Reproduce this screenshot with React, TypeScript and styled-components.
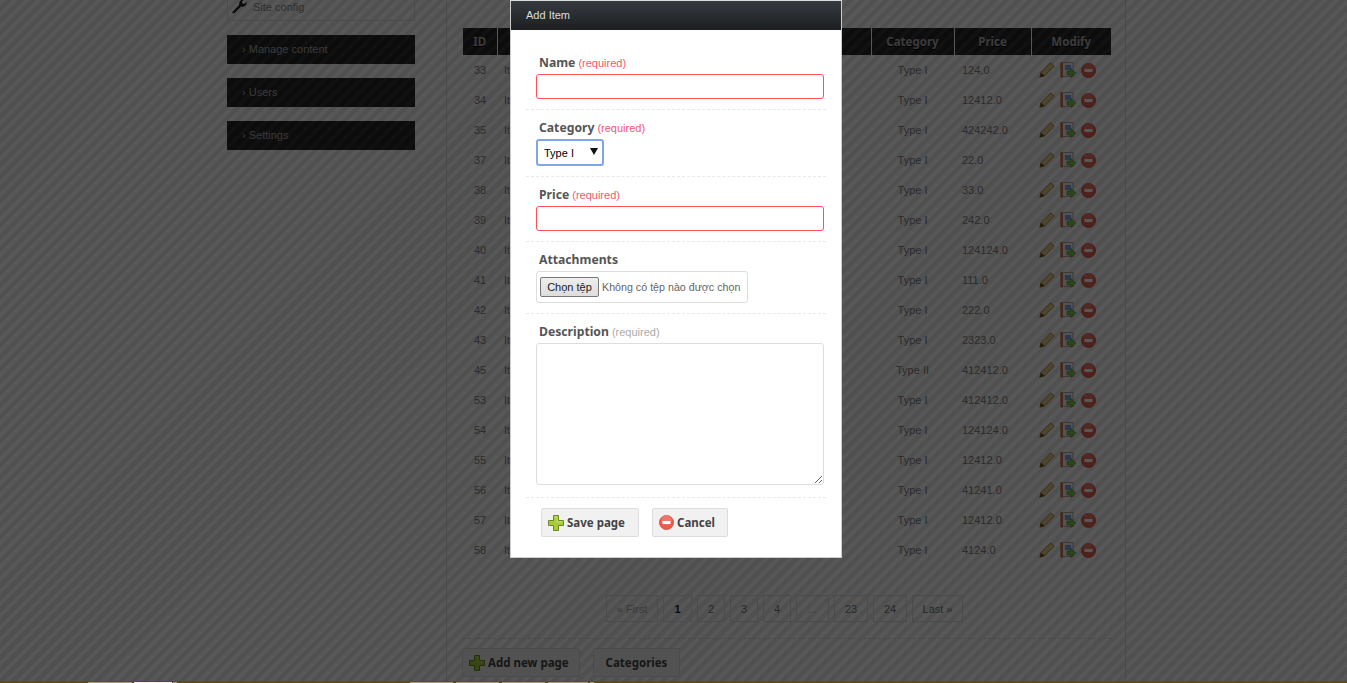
import React from "react";
import styled, { createGlobalStyle } from "styled-components";

const Global = createGlobalStyle`
  html, body { margin: 0; padding: 0; height: 100%; overflow: hidden; }
  body { font-family: "Liberation Sans", Arial, sans-serif; font-size: 11px; color: #666; }
  * { box-sizing: border-box; }
`;

const Page = styled.div`
  position: relative;
  width: 1347px;
  height: 683px;
  overflow: hidden;
  display: flex;
  flex-direction: column;
  background: repeating-linear-gradient(135deg, #ffffff 0 4px, #e9e9e9 4px 8.5px);
`;
const Columns = styled.div`
  flex: 1;
  min-height: 0;
  display: flex;
  padding-left: 227px;
  gap: 31px;
`;
const Sidebar = styled.aside`
  width: 188px;
  display: flex;
  flex-direction: column;
  gap: 14px;
`;
const ConfigBox = styled.div`
  height: 21px;
  border: 1px solid #ddd;
  border-top: none;
  display: flex;
  align-items: flex-end;
  gap: 6px;
  padding: 0 0 6px 3px;
  font-size: 11px;
  line-height: 14px;
  color: #888;
`;
const MenuBlock = styled.div`
  height: 29px;
  display: flex;
  align-items: center;
  padding: 0 0 2px 15px;
  font-size: 11px;
  color: #aaa;
  background: repeating-linear-gradient(135deg, #303033 0 4px, #232325 4px 8.5px);
`;
const Main = styled.main`
  width: 680px;
  height: 681px;
  border-left: 1px solid #d8d8d8;
  border-right: 1px solid #d8d8d8;
  padding: 28px 14px 0 16px;
  display: flex;
  flex-direction: column;
`;
const Table = styled.table`
  width: 648px;
  border-collapse: collapse;
  table-layout: fixed;
`;
const Th = styled.th<{ $w: number }>`
  width: ${(p) => p.$w}px;
  height: 27px;
  padding: 0;
  font-family: "Noto Sans", "Liberation Sans", sans-serif;
  font-size: 11.5px;
  font-weight: 700;
  color: #b0b0b0;
  text-shadow: 0 1px 0 #000;
  border-left: 1px solid #fff;
  background: repeating-linear-gradient(135deg, #343437 0 4px, #252527 4px 8.5px);
  &:first-child { border-left: none; }
`;
const Td = styled.td<{ $align?: string }>`
  height: 30px;
  padding: 0;
  text-align: ${(p) => p.$align || "center"};
  font-size: 11px;
  color: #808080;
`;
const NameCell = styled(Td)`
  padding-left: 7px;
`;
const PriceCell = styled(Td)`
  text-align: left;
  padding-left: 8px;
`;
const Actions = styled.div`
  display: flex;
  align-items: center;
  padding-left: 8px;
  gap: 5px;
`;
const Pager = styled.nav`
  margin-top: 30px;
  display: flex;
  padding-left: 143px;
  gap: 5px;
`;
const PageLink = styled.span<{ $w: number; $current?: boolean; $off?: boolean }>`
  width: ${(p) => p.$w}px;
  height: 27px;
  display: flex;
  align-items: center;
  justify-content: center;
  font-size: 11px;
  font-weight: ${(p) => (p.$current ? 700 : 400)};
  color: ${(p) => (p.$current ? "#222" : p.$off ? "#aaa" : "#777")};
  border: 1px solid ${(p) => (p.$current ? "#e0e0e0" : "#ddd")};
`;
const Divider = styled.div`
  margin-top: 16px;
  border-top: 1px dashed #d8d8d8;
`;
const BottomActions = styled.div`
  margin: 9px 0 0 -1px;
  display: flex;
  gap: 13px;
`;
const ActionButton = styled.button<{ $w: number; $center?: boolean }>`
  width: ${(p) => p.$w}px;
  height: 29px;
  padding: 0 0 0 ${(p) => (p.$center ? 0 : 6)}px;
  display: flex;
  align-items: center;
  justify-content: ${(p) => (p.$center ? "center" : "flex-start")};
  gap: 3px;
  font-family: "Noto Sans", "Liberation Sans", sans-serif;
  font-size: 11.5px;
  font-weight: 700;
  color: #444;
  background: #f1f1f1;
  border: 1px solid #ddd;
  border-radius: 2px;
`;
const BottomStrip = styled.div`
  position: relative;
  z-index: 3;
  height: 2px;
  background: #5a4a20;
  display: flex;
  align-items: flex-end;
  padding-left: 88px;
`;
const StripTab = styled.i<{ $w: number; $ml: number; $light?: boolean }>`
  display: block;
  width: ${(p) => p.$w}px;
  height: 1px;
  margin-left: ${(p) => p.$ml}px;
  background: ${(p) => (p.$light ? "#f4f1e6" : "#a59c80")};
`;
const Overlay = styled.div`
  position: absolute;
  inset: 0;
  z-index: 1;
  background: rgba(0, 0, 0, 0.66);
`;
const Modal = styled.section`
  position: absolute;
  z-index: 2;
  left: 510px;
  top: 0;
  width: 332px;
  height: 558px;
  background: #fff;
  border: 1px solid #ccc;
  border-top-color: #ddd;
`;
const ModalHeader = styled.header`
  height: 29px;
  display: flex;
  align-items: center;
  padding: 0 0 2px 15px;
  font-size: 11px;
  color: #ddd;
  background: linear-gradient(#363a3f, #1d1f21);
`;
const Form = styled.form`
  padding: 0 15px 0 19px;
  margin: 0;
`;
const Field = styled.div<{ $h: number; $top: number }>`
  height: ${(p) => p.$h}px;
  margin: 0 0 0 -4px;
  width: 300px;
  padding: ${(p) => p.$top}px 0 0 10px;
  border-bottom: 1px dashed #e8e8e8;
  display: flex;
  flex-direction: column;
  align-items: flex-start;
`;
const Label = styled.label`
  display: block;
  height: 18px;
  padding-left: 3px;
  line-height: 18px;
  font-family: "Noto Sans", "Liberation Sans", sans-serif;
  font-size: 12.2px;
  font-weight: 700;
  color: #555;
`;
const Hint = styled.span<{ $muted?: boolean }>`
  margin-left: 3px;
  font-family: "Liberation Sans", Arial, sans-serif;
  font-size: 11px;
  font-weight: 400;
  color: ${(p) => (p.$muted ? "#aaa" : "#f4566e")};
`;
const TextInput = styled.input`
  width: 288px;
  height: 25px;
  margin-top: 2px;
  border: 1px solid #ff5058;
  border-radius: 3px;
  background: #fff;
  outline: none;
`;
const SelectWrap = styled.div`
  position: relative;
  width: 68px;
  height: 27px;
  margin-top: 2px;
`;
const Select = styled.select`
  appearance: none;
  width: 68px;
  height: 27px;
  padding: 0 0 0 6px;
  border: 2px solid #7fa5ea;
  border-radius: 3px;
  background: #fff;
  color: #000;
  font-family: "Liberation Sans", Arial, sans-serif;
  font-size: 11px;
  outline: none;
`;
const Arrow = styled.svg`
  position: absolute;
  right: 6px;
  top: 9px;
  pointer-events: none;
`;
const FileBox = styled.div`
  width: 212px;
  height: 32px;
  margin-top: 2px;
  padding: 0 0 0 3px;
  display: flex;
  align-items: center;
  gap: 3px;
  border: 1px solid #ddd;
  border-radius: 3px;
  font-size: 10.7px;
  color: #666;
  white-space: nowrap;
`;
const FileButton = styled.button`
  width: 59px;
  height: 20px;
  padding: 0;
  font-family: "Liberation Sans", Arial, sans-serif;
  font-size: 11px;
  color: #222;
  background: linear-gradient(#eee, #ddd);
  border: 1px solid #777;
  border-radius: 2px;
`;
const TextArea = styled.textarea`
  width: 288px;
  height: 142px;
  margin-top: 2px;
  border: 1px solid #ddd;
  border-radius: 3px;
  background: #fff;
  outline: none;
`;
const FormButtons = styled.div`
  display: flex;
  gap: 13px;
  padding: 10px 0 0 11px;
`;

const WrenchIcon = () => (
  <svg width="16" height="16" viewBox="0 0 16 16" fill="#222">
    <path d="M1 14.5 8.2 6.8C7.6 4 9.6 1 13.4 1.2L11 3.6l.4 2 2 .5 2.3-2.4C16 7.400 13 9.400 10 8.600L3 15.600z" />
  </svg>
);
const PlusIcon = () => (
  <svg width="16" height="16" viewBox="0 0 16 16">
    <path d="M5.500.5h5v5h5v5h-5v5h-5v-5h-5v-5h5z" fill="#a8c93c" stroke="#6d8a22" />
    <path d="M6.500 1.500h3v5h5v1h-6v-5h-2z" fill="#c9e26c" />
  </svg>
);
const CancelIcon = () => (
  <svg width="15" height="15" viewBox="0 0 15 15">
    <circle cx="7.500" cy="7.500" r="7" fill="#e4604f" stroke="#d0554a" />
    <circle cx="7.500" cy="5" r="5" fill="#f08a78" opacity=".6" />
    <rect x="3.500" y="6" width="8" height="3" fill="#fff" />
  </svg>
);
const PencilIcon = () => (
  <svg width="16" height="16" viewBox="0 0 16 16">
    <path d="M.8 15.200 2 10.500 11.800.8l3.400 3.400-9.700 9.800z" fill="#e4c98c" stroke="#b0864a" />
    <path d="M.8 15.200 2 10.500l3.500 3.500z" fill="#6e4c1c" />
  </svg>
);
const BookIcon = () => (
  <svg width="16" height="16" viewBox="0 0 16 16">
    <rect x="1" y="0.500" width="12" height="14" fill="#f4f4f4" stroke="#aaa" />
    <rect x="0.500" y="0.500" width="2.500" height="15" fill="#d8704a" />
    <rect x="5" y="3" width="6" height="5" fill="#7fa8e0" />
    <path d="M7 9h4V6.500L15.800 11 11 15.500V13H7z" fill="#86c850" stroke="#5a9a30" strokeWidth=".8" />
  </svg>
);

const rows: [number, string, string][] = [
  [33, "Type I", "124.0"],
  [34, "Type I", "12412.0"],
  [35, "Type I", "424242.0"],
  [37, "Type I", "22.0"],
  [38, "Type I", "33.0"],
  [39, "Type I", "242.0"],
  [40, "Type I", "124124.0"],
  [41, "Type I", "111.0"],
  [42, "Type I", "222.0"],
  [43, "Type I", "2323.0"],
  [45, "Type II", "412412.0"],
  [53, "Type I", "412412.0"],
  [54, "Type I", "124124.0"],
  [55, "Type I", "12412.0"],
  [56, "Type I", "41241.0"],
  [57, "Type I", "12412.0"],
  [58, "Type I", "4124.0"],
];

const pages: { t: string; w: number; current?: boolean; off?: boolean }[] = [
  { t: "« First", w: 52, off: true },
  { t: "1", w: 29, current: true },
  { t: "2", w: 28 },
  { t: "3", w: 28 },
  { t: "4", w: 28 },
  { t: "...", w: 33, off: true },
  { t: "23", w: 34 },
  { t: "24", w: 34 },
  { t: "Last »", w: 51 },
];

export default function App() {
  return (
    <Page>
      <Global />
      <Columns>
        <Sidebar>
          <ConfigBox>
            <WrenchIcon />
            Site config
          </ConfigBox>
          <MenuBlock>› Manage content</MenuBlock>
          <MenuBlock>› Users</MenuBlock>
          <MenuBlock>› Settings</MenuBlock>
        </Sidebar>
        <Main>
          <Table>
            <thead>
              <tr>
                <Th $w={34}>ID</Th>
                <Th $w={374}>Name</Th>
                <Th $w={83}>Category</Th>
                <Th $w={77}>Price</Th>
                <Th $w={80}>Modify</Th>
              </tr>
            </thead>
            <tbody>
              {rows.map(([id, cat, price]) => (
                <tr key={id}>
                  <Td>{id}</Td>
                  <NameCell $align="left">Item {id}</NameCell>
                  <Td>{cat}</Td>
                  <PriceCell>{price}</PriceCell>
                  <Td>
                    <Actions>
                      <PencilIcon />
                      <BookIcon />
                      <CancelIcon />
                    </Actions>
                  </Td>
                </tr>
              ))}
            </tbody>
          </Table>
          <Pager>
            {pages.map((p) => (
              <PageLink key={p.t} $w={p.w} $current={p.current} $off={p.off}>
                {p.t}
              </PageLink>
            ))}
          </Pager>
          <Divider />
          <BottomActions>
            <ActionButton $w={118}>
              <PlusIcon />
              Add new page
            </ActionButton>
            <ActionButton $w={87} $center>
              Categories
            </ActionButton>
          </BottomActions>
        </Main>
      </Columns>
      <BottomStrip>
        <StripTab $w={44} $ml={0} />
        <StripTab $w={38} $ml={2} $light />
        <StripTab $w={4} $ml={1} />
        <StripTab $w={43} $ml={233} />
        <StripTab $w={43} $ml={3} />
        <StripTab $w={43} $ml={3} />
        <StripTab $w={40} $ml={3} />
        <StripTab $w={4} $ml={2} />
      </BottomStrip>
      <Overlay />
      <Modal>
        <ModalHeader>Add Item</ModalHeader>
        <Form>
          <Field $h={80} $top={24}>
            <Label>
              Name<Hint>(required)</Hint>
            </Label>
            <TextInput />
          </Field>
          <Field $h={67} $top={9}>
            <Label>
              Category<Hint>(required)</Hint>
            </Label>
            <SelectWrap>
              <Select defaultValue="Type I">
                <option>Type I</option>
                <option>Type II</option>
              </Select>
              <Arrow width="8" height="7" viewBox="0 0 8 7">
                <path d="M0 0h8L4 7z" fill="#111" />
              </Arrow>
            </SelectWrap>
          </Field>
          <Field $h={65} $top={9}>
            <Label>
              Price<Hint>(required)</Hint>
            </Label>
            <TextInput />
          </Field>
          <Field $h={72} $top={9}>
            <Label>Attachments</Label>
            <FileBox>
              <FileButton type="button">Chọn tệp</FileButton>
              Không có tệp nào được chọn
            </FileBox>
          </Field>
          <Field $h={184} $top={9}>
            <Label>
              Description<Hint $muted>(required)</Hint>
            </Label>
            <TextArea />
          </Field>
          <FormButtons>
            <ActionButton $w={98} type="button">
              <PlusIcon />
              Save page
            </ActionButton>
            <ActionButton $w={76} type="button">
              <CancelIcon />
              Cancel
            </ActionButton>
          </FormButtons>
        </Form>
      </Modal>
    </Page>
  );
}
